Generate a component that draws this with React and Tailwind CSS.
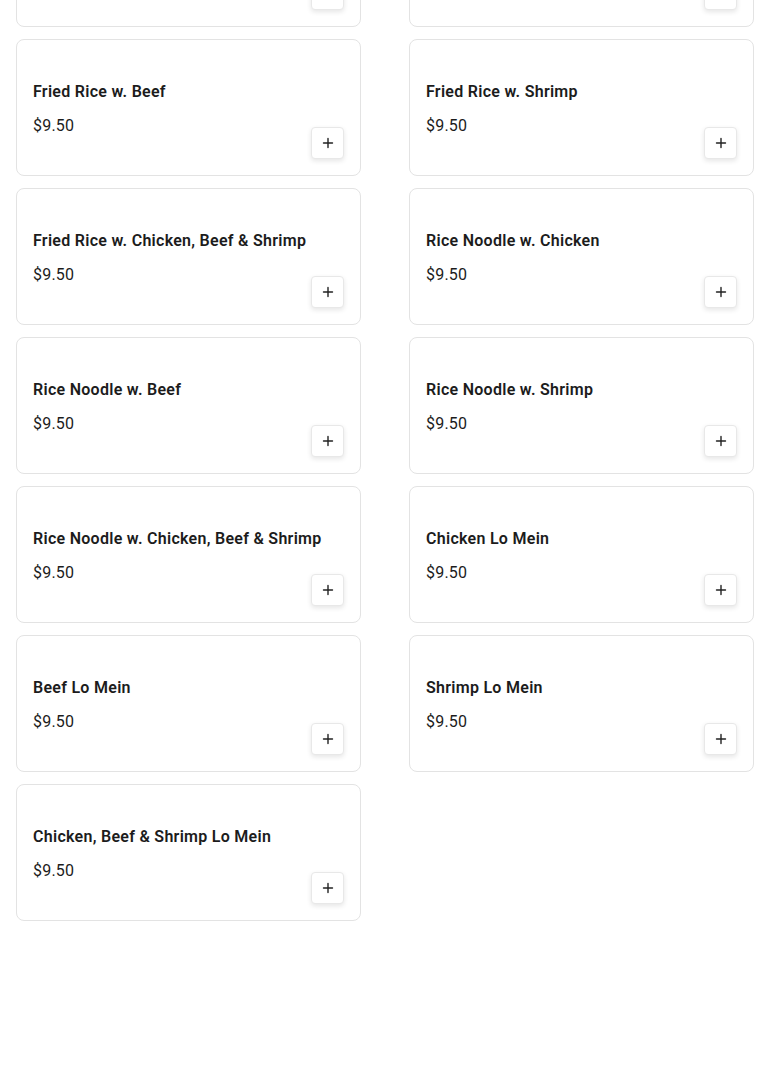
import React from "react";

const items = [
  "Fried Rice w. Chicken",
  "Fried Rice w. Vegetable",
  "Fried Rice w. Beef",
  "Fried Rice w. Shrimp",
  "Fried Rice w. Chicken, Beef & Shrimp",
  "Rice Noodle w. Chicken",
  "Rice Noodle w. Beef",
  "Rice Noodle w. Shrimp",
  "Rice Noodle w. Chicken, Beef & Shrimp",
  "Chicken Lo Mein",
  "Beef Lo Mein",
  "Shrimp Lo Mein",
  "Chicken, Beef & Shrimp Lo Mein",
];

function Card({ title }) {
  return (
    <div className="flex h-[137px] rounded-lg border border-[#e3e3e3] bg-white p-4">
      <div className="flex w-0 flex-1 flex-col justify-center gap-[10px] pt-[2px]">
        <div className="whitespace-nowrap text-[16px] font-semibold leading-6 tracking-[0.28px] text-[#1c1c1c]">{title}</div>
        <div className="text-[16px] leading-6 tracking-[0.2px] text-[#1c1c1c]">$9.50</div>
      </div>
      <button className="flex h-8 w-[33px] shrink-0 items-center justify-center self-end rounded-[4px] border border-[#e8e8e8] bg-white shadow-[0_2px_5px_rgba(0,0,0,0.1)]">
        <svg width="12" height="12" viewBox="0 0 12 12" fill="none">
          <path d="M6 1.5v9M1.5 6h9" stroke="#222" strokeWidth="1.4" strokeLinecap="round" />
        </svg>
      </button>
    </div>
  );
}

export default function App() {
  return (
    <div className="h-[1091px] overflow-hidden bg-white" style={{ fontFamily: "Roboto, 'Noto Sans', sans-serif" }}>
      <div className="mt-[-110px] grid grid-cols-2 gap-x-12 gap-y-3 px-4">
        {items.map((t) => (
          <Card key={t} title={t} />
        ))}
      </div>
    </div>
  );
}
